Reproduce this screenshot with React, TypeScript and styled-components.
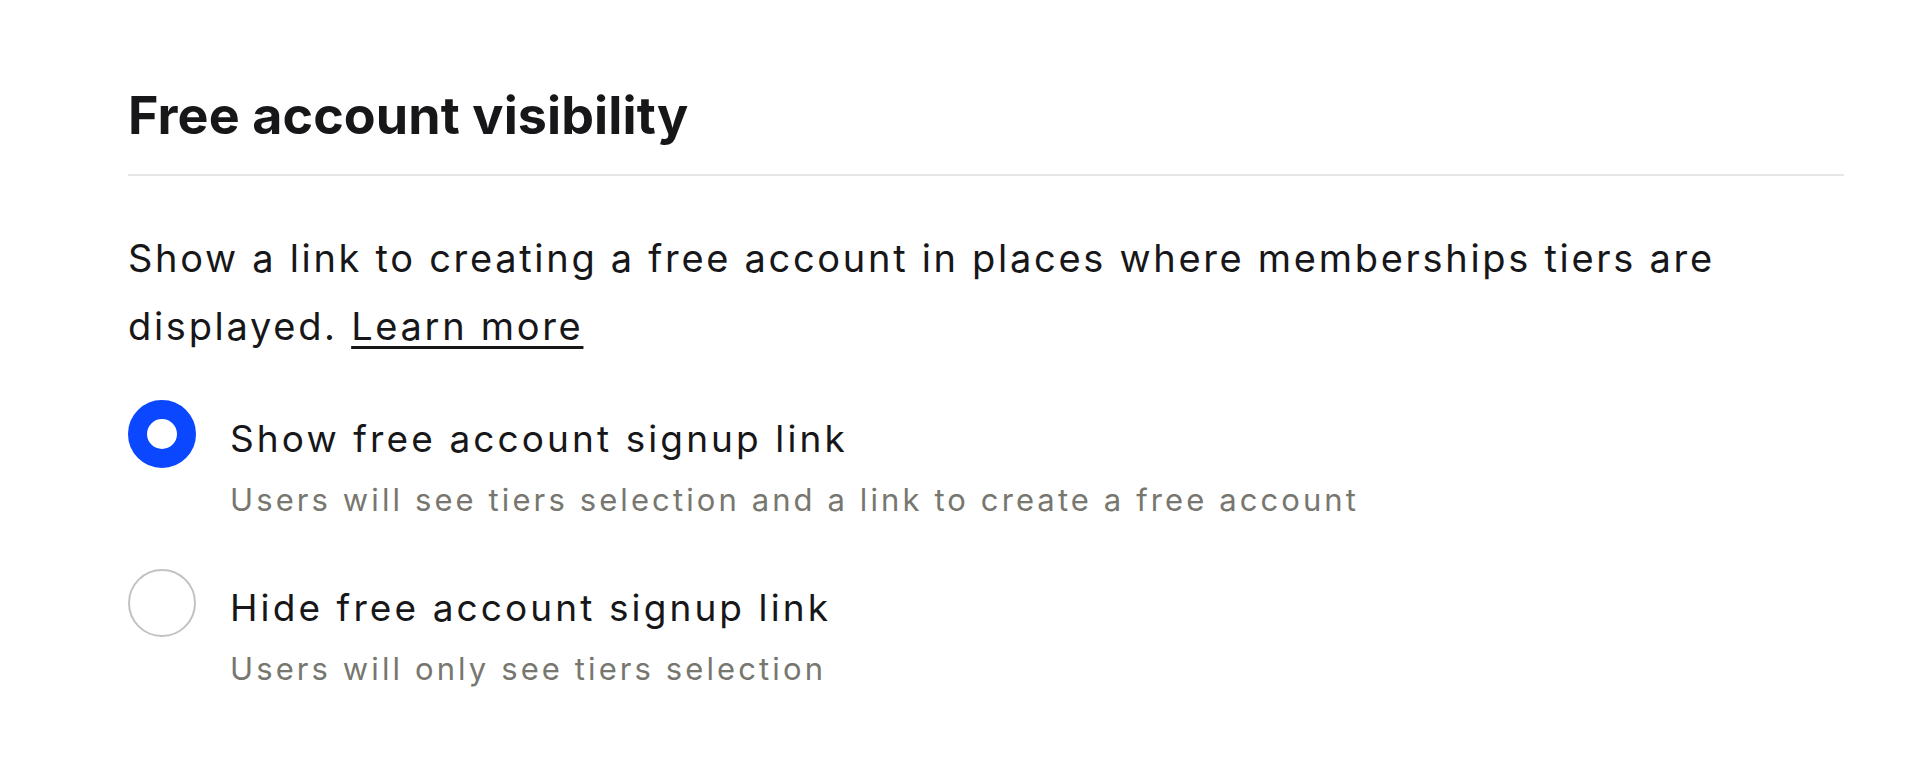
import React, { useState } from 'react';
import styled, { createGlobalStyle } from 'styled-components';

const GlobalStyle = createGlobalStyle`
  html, body {
    margin: 0;
    padding: 0;
    background: #ffffff;
  }
  body {
    font-family: Inter, "Noto Sans", "Liberation Sans", sans-serif;
    color: #15171a;
    -webkit-font-smoothing: antialiased;
  }
`;

const Page = styled.div`
  padding: 85px 76px 0 128px;
`;

const Section = styled.section`
  display: flex;
  flex-direction: column;
`;

const Heading = styled.h2`
  margin: 0;
  padding-bottom: 27px;
  border-bottom: 2px solid #e6e6e6;
  font-size: 52px;
  line-height: 62px;
  font-weight: 700;
  letter-spacing: 0.1px;
  color: #17171a;
`;

const Description = styled.p`
  margin: 48px 0 0;
  font-size: 38px;
  line-height: 68px;
  letter-spacing: 2.7px;
  color: #17171a;
`;

const LearnMore = styled.a`
  color: inherit;
  text-decoration: underline;
  text-decoration-thickness: 3px;
  text-underline-offset: 6px;
`;

const Options = styled.div`
  display: flex;
  flex-direction: column;
  gap: 47px;
  margin-top: 40px;
`;

const Option = styled.label`
  display: flex;
  align-items: flex-start;
  gap: 34px;
  cursor: pointer;
`;

const Radio = styled.span<{ $checked: boolean }>`
  flex: none;
  box-sizing: border-box;
  width: 68px;
  height: 68px;
  border-radius: 50%;
  background: #ffffff;
  border: ${p => (p.$checked ? '19px solid #0a47ff' : '2.5px solid #c2c2c2')};
`;

const OptionText = styled.span`
  display: flex;
  flex-direction: column;
`;

const OptionTitle = styled.span`
  font-size: 37px;
  line-height: 77px;
  letter-spacing: 3.1px;
  color: #17171a;
`;

const OptionHint = styled.span`
  font-size: 31px;
  line-height: 45px;
  letter-spacing: 3.1px;
  color: #77776f;
`;

const options = [
  {
    id: 'show',
    title: 'Show free account signup link',
    hint: 'Users will see tiers selection and a link to create a free account',
  },
  {
    id: 'hide',
    title: 'Hide free account signup link',
    hint: 'Users will only see tiers selection',
  },
];

const App: React.FC = () => {
  const [selected, setSelected] = useState('show');

  return (
    <>
      <GlobalStyle />
      <Page>
        <Section>
          <Heading>Free account visibility</Heading>
          <Description>
            Show a link to creating a free account in places where memberships tiers are
            displayed. <LearnMore href="#">Learn more</LearnMore>
          </Description>
          <Options>
            {options.map(o => (
              <Option key={o.id} onClick={() => setSelected(o.id)}>
                <Radio $checked={selected === o.id} />
                <OptionText>
                  <OptionTitle>{o.title}</OptionTitle>
                  <OptionHint>{o.hint}</OptionHint>
                </OptionText>
              </Option>
            ))}
          </Options>
        </Section>
      </Page>
    </>
  );
};

export default App;
